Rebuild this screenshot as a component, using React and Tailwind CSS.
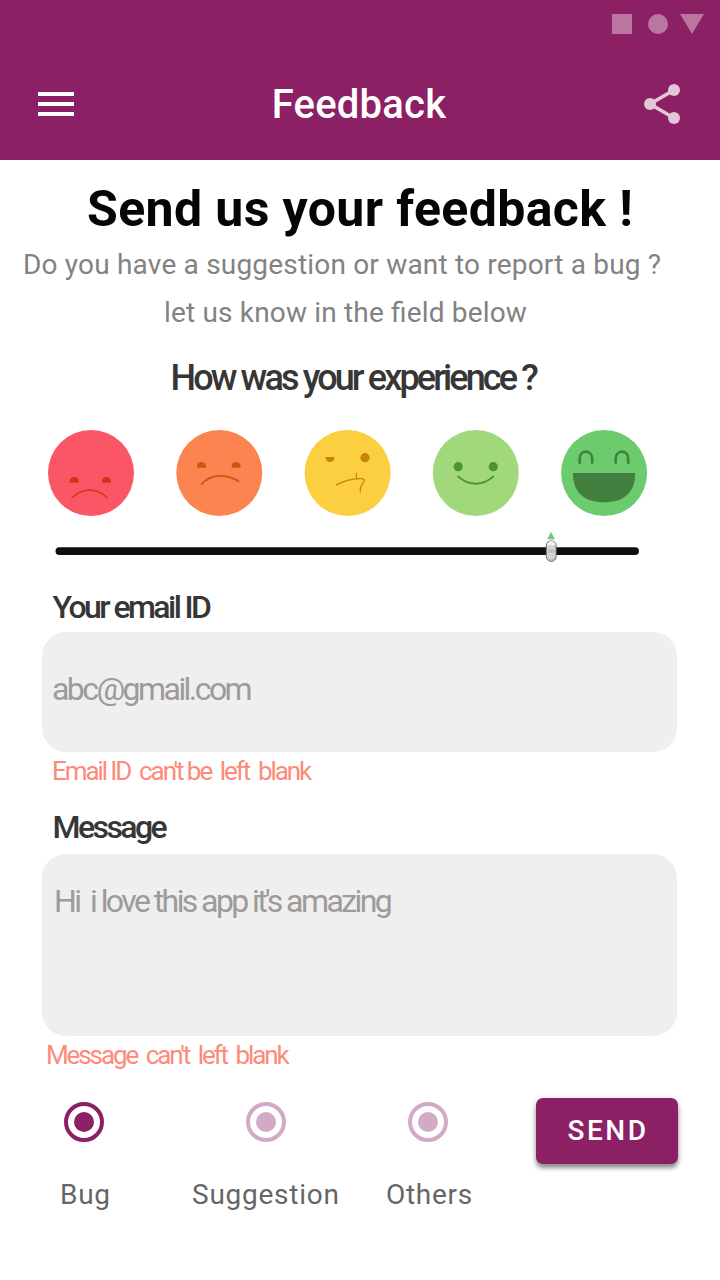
const faces = [
  {
    label: "Very bad",
    color: "#fb5665",
    shift: 0,
    drawing: (
      <>
        <path d="M21.7 52.7V51.4a4.5 4.4 0 0 1 9 0V52.7Z" fill="#cb3716" />
        <path d="M54 52.7V51.4a4.5 4.4 0 0 1 9 0V52.7Z" fill="#cb3716" />
        <path d="M24 67.7Q41.7 52.5 59.3 67.7" stroke="#cb3716" strokeWidth="1.4" />
      </>
    ),
  },
  {
    label: "Bad",
    color: "#fc8450",
    shift: 0.3,
    drawing: (
      <>
        <path d="M20.7 37.8V36.4a4.5 4.4 0 0 1 9 0V37.8Z" fill="#c9560f" />
        <path d="M55.3 37.8V36.4a4.5 4.4 0 0 1 9 0V37.8Z" fill="#c9560f" />
        <path d="M25.2 54.2C34 44.5 48 42.8 62.3 51.2" stroke="#c9560f" strokeWidth="1.8" />
      </>
    ),
  },
  {
    label: "Unsure",
    color: "#fccf41",
    shift: -0.4,
    drawing: (
      <>
        <path d="M21 27H29.9V27.6a4.45 4.5 0 0 1-8.9 0Z" fill="#c9820c" />
        <circle cx="60.4" cy="27.7" r="4.6" fill="#c9820c" />
        <path d="M31.8 54.9C39 51.2 48 48.3 56.6 48.7C60 48.9 60.4 50.3 58.6 52.6C56.4 55.4 55.2 58.5 55.8 62.1" stroke="#c9820c" strokeWidth="1.3" />
        <path d="M52.1 43.4C51 45 51.2 46.3 52 48.6" stroke="#c9820c" strokeWidth="1.2" />
      </>
    ),
  },
  {
    label: "Good",
    color: "#a1d87b",
    shift: -0.2,
    drawing: (
      <>
        <circle cx="25.4" cy="36.7" r="4.6" fill="#4c952b" />
        <circle cx="60.4" cy="36.7" r="4.6" fill="#4c952b" />
        <path d="M25.3 46.4C35.5 56 50 56.3 60.5 46.4" stroke="#4c952b" strokeWidth="1.9" />
      </>
    ),
  },
  {
    label: "Great",
    color: "#6ccb6d",
    shift: 0.1,
    drawing: (
      <>
        <path d="M18.6 32.8V28.5C18.6 19.3 31.1 19.3 31.1 28.5V32.8" stroke="#42803f" strokeWidth="2.6" />
        <path d="M54.6 32.8V28.5C54.6 19.3 67.1 19.3 67.1 28.5V32.8" stroke="#42803f" strokeWidth="2.6" />
        <path d="M11.8 43H74.1C74.1 61.5 64 72.3 43 72.3S11.8 61.5 11.8 43Z" fill="#42803f" />
      </>
    ),
  },
];

function Face({ label, color, shift, drawing }) {
  return (
    <svg role="img" aria-label={label} viewBox="0 0 86 86" className="size-[86px] overflow-visible" fill="none" strokeLinecap="round" strokeLinejoin="round">
      <g transform={`translate(${shift} 0)`}>
        <circle cx="43" cy="43" r="43" fill={color} />
        {drawing}
      </g>
    </svg>
  );
}

function Radio({ active }) {
  return (
    <svg viewBox="0 0 40 40" className={active ? "size-10 text-[#8b2164]" : "size-10 text-[#d3aac6]"}>
      <circle cx="20" cy="20" r="18" fill="none" stroke="currentColor" strokeWidth="4" />
      <circle cx="20" cy="20" r="10" fill="currentColor" />
    </svg>
  );
}

function Header() {
  return (
    <header className="h-40 bg-[#8b2164]">
      <div className="flex h-12 items-center justify-end pr-4">
        <svg viewBox="0 0 92 20" className="h-5 w-[92px]" fill="#b9769f">
          <rect width="20" height="20" />
          <circle cx="46" cy="10" r="10" />
          <path d="M68 0H92L80 20Z" />
        </svg>
      </div>
      <div className="grid h-28 grid-cols-[1fr_auto_1fr] items-center pl-[38px] pr-10">
        <div className="flex w-9 flex-col gap-1.5">
          <span className="h-1 bg-white" />
          <span className="h-1 bg-white" />
          <span className="h-1 bg-white" />
        </div>
        <h1 className="pt-0.5 text-[40px] leading-[56px] font-medium tracking-[0.2px] text-white">Feedback</h1>
        <svg viewBox="0 0 36 40" className="h-10 w-9 justify-self-end text-[#e2c7d8]">
          <path d="M30 6L6 20L30 34" fill="none" stroke="currentColor" strokeWidth="3.6" />
          <circle cx="30" cy="6" r="6" fill="currentColor" />
          <circle cx="6" cy="20" r="6" fill="currentColor" />
          <circle cx="30" cy="34" r="6" fill="currentColor" />
        </svg>
      </div>
    </header>
  );
}

function Slider() {
  return (
    <svg viewBox="0 0 584 32" className="mt-[15px] ml-[55px] h-8 w-[584px]">
      <rect x="0.5" y="16.2" width="583.5" height="7.8" rx="3.9" fill="#0e0f0f" />
      <path d="M496 0.8L499.8 8.2H492.2Z" fill="#6ccb6d" />
      <rect x="491.3" y="9.8" width="9.8" height="20.6" rx="4.7" fill="#d3d4d5" stroke="#6a6c6e" strokeWidth="1" />
      <path d="M492.6 14.2C492.8 9.3 499.8 9.3 500 14.2" fill="#f3f3f3" stroke="#fff" strokeWidth="1" />
      <path d="M493 27C494.3 30 498.3 30 499.6 27" fill="none" stroke="#a9abad" strokeWidth="1" />
      <rect x="493.3" y="18.7" width="6" height="3" fill="#bdbebf" />
    </svg>
  );
}

export default function App() {
  return (
    <div className="h-[1280px] w-[720px] overflow-hidden bg-white font-['Roboto',sans-serif]">
      <Header />
      <main>
        <h2 className="mt-[25px] pl-[87px] text-[50px] leading-[48px] font-bold tracking-[0.38px] whitespace-nowrap text-[#050505]">
          Send us your feedback !
        </h2>
        <div className="mt-2 text-[28px] leading-[48px] whitespace-nowrap text-[#828282] [font-feature-settings:'liga'_1]">
          <p className="pl-[23px] tracking-[0.19px]">Do you have a suggestion or want to report a bug ?</p>
          <p className="pl-[164px] tracking-[0.17px]">let us know in the field below</p>
        </div>
        <h3 className="mt-[21px] pl-[170.5px] text-[36px] leading-10 font-medium tracking-[-0.08em] whitespace-nowrap text-[#363636]">
          How was your experience ?
        </h3>
        <div className="mt-8 ml-12 flex w-[599px] justify-between">
          {faces.map((face) => (
            <Face key={face.label} {...face} />
          ))}
        </div>
        <Slider />

        <section className="mt-6 pr-[43px] pl-[42px]">
          <h4 className="pl-[10.5px] text-[32px] leading-10 font-medium tracking-[-0.08em] text-[#363636]">Your email ID</h4>
          <div className="mt-[5px] h-[120px] rounded-[24px] bg-[#efefef] pt-[37px] pl-2.5 text-[32px] leading-10 tracking-[-0.08em] text-[#9e9a9a]">
            abc@gmail.com
          </div>
          <p className="pl-2.5 text-[26px] leading-[38px] tracking-[-0.08em] whitespace-pre text-[#fd8b79]">
            {"Email ID  can't be  left  blank"}
          </p>
        </section>

        <section className="mt-[17px] pr-[43px] pl-[42px]">
          <h4 className="pl-[10.5px] text-[32px] leading-10 font-medium tracking-[-0.08em] text-[#363636]">Message</h4>
          <div className="mt-[7px] h-[182px] rounded-[24px] bg-[#efefef] pt-[27px] pl-3 text-[32px] leading-10 tracking-[-2.59px] whitespace-pre text-[#9e9a9a]">
            {"Hi  i love this app it's amazing"}
          </div>
          <p className="pl-1 text-[26px] leading-[38px] tracking-[-2.11px] whitespace-pre text-[#fd8b79]">
            {"Message  can't  left  blank"}
          </p>
        </section>

        <div className="mt-6 flex items-start text-[28px] leading-8 text-[#666]">
          <div className="ml-[60px] flex w-[132px] flex-col gap-[37px] pt-1">
            <div className="pl-1"><Radio active /></div>
            <span className="tracking-[0.7px]">Bug</span>
          </div>
          <div className="flex w-[194px] flex-col gap-[37px] pt-1">
            <div className="pl-[54px]"><Radio /></div>
            <span className="tracking-[0.75px]">Suggestion</span>
          </div>
          <div className="flex w-[150px] flex-col gap-[37px] pt-1">
            <div className="pl-[22px]"><Radio /></div>
            <span className="tracking-[0.7px]">Others</span>
          </div>
          <button className="h-[66px] w-[142px] rounded-[7px] bg-[#8b2164] pl-0.5 text-[28px] leading-8 font-medium tracking-[2.5px] text-white shadow-[0_4px_4px_rgba(0,0,0,0.4),0_1px_8px_rgba(0,0,0,0.12)]">
            SEND
          </button>
        </div>
      </main>
    </div>
  );
}
